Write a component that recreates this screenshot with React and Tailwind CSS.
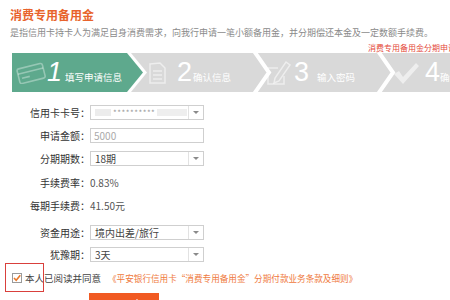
import React from "react";

function Arrow() {
  return (
    <div className="w-[15px] border-l border-[#e2e2e2] flex items-center justify-center">
      <div className="w-0 h-0 border-l-[3px] border-r-[3px] border-t-[3px] border-l-transparent border-r-transparent border-t-[#8a8a8a]" />
    </div>
  );
}

function Row({ label, mt, children }) {
  return (
    <div className={`flex items-center h-[15px] ${mt}`}>
      <div className="w-[90px] text-right leading-[15px] whitespace-nowrap">{label}</div>
      {children}
    </div>
  );
}

function Select({ children }) {
  return (
    <div className="w-[114px] h-[15px] border border-[#cfcfcf] flex items-stretch bg-white">
      <div className="flex-1 flex items-center pl-[4px] leading-[13px] text-[#444] overflow-hidden whitespace-nowrap">{children}</div>
      <Arrow />
    </div>
  );
}

export default function App() {
  return (
    <div className="w-[450px] h-[300px] overflow-hidden bg-white relative font-['Noto_Sans_CJK_SC','Liberation_Sans',sans-serif]">
      <div className="pl-[10px] pt-[8px] text-[12px] leading-[14px] font-bold text-[#e8632c]">消费专用备用金</div>
      <div className="pl-[10px] mt-[5px] text-[9px] leading-[11px] text-[#8a8a8a] whitespace-nowrap">
        是指信用卡持卡人为满足自身消费需求，向我行申请一笔小额备用金，并分期偿还本金及一定数额手续费。
      </div>
      <div className="pl-[368px] mt-[5px] text-[8px] leading-[9px] text-[#e4493a] whitespace-nowrap">消费专用备用金分期申请</div>

      {/* step bar */}
      <div className="ml-[12px] mt-[1px] w-[438px] h-[39px] relative">
        <svg className="absolute inset-0" width="438" height="39" viewBox="0 0 438 39">
          <rect x="0" y="0" width="438" height="39" fill="#d9d9d9" />
          <polygon points="0,0 119,0 135,19.5 119,39 0,39" fill="#ffffff" />
          <polygon points="0,0 115,0 131,19.5 115,39 0,39" fill="#5ea98d" />
          <polyline points="242,-2 257,19.5 242,41" fill="none" stroke="#ffffff" strokeWidth="4" />
          <polyline points="366,-2 381,19.5 366,41" fill="none" stroke="#ffffff" strokeWidth="4" />
        </svg>
        <div className="relative flex h-full items-center text-white">
          {/* step 1 */}
          <div className="w-[123px] flex items-center pl-[3px]">
            <svg width="32" height="22" viewBox="0 0 32 22" className="shrink-0">
              <g transform="rotate(-14 16 11)" fill="none" stroke="#ffffff" strokeOpacity="0.35" strokeWidth="1.6">
                <rect x="3" y="4" width="26" height="15" rx="2" />
                <line x1="3" y1="9" x2="29" y2="9" />
                <line x1="6" y1="14" x2="14" y2="14" />
              </g>
            </svg>
            <div className="flex items-baseline">
              <span className="text-[27px] leading-none italic font-['Liberation_Sans',sans-serif] font-light">1</span>
              <span className="ml-[3px] text-[9.5px] leading-[11px] whitespace-nowrap">填写申请信息</span>
            </div>
          </div>
          {/* step 2 */}
          <div className="w-[123px] flex items-center pl-[12px]">
            <svg width="20" height="24" viewBox="0 0 20 24" className="shrink-0">
              <g fill="none" stroke="#ffffff" strokeOpacity="0.55" strokeWidth="1.5">
                <path d="M3 3 L13 2 L18 7 L18 22 L3 22 Z" />
                <line x1="6" y1="10" x2="15" y2="10" />
                <line x1="6" y1="14" x2="15" y2="14" />
                <line x1="6" y1="18" x2="15" y2="18" />
              </g>
            </svg>
            <div className="flex items-baseline ml-[10px]">
              <span className="text-[27px] leading-none font-['Liberation_Sans',sans-serif]">2</span>
              <span className="ml-[1px] text-[9.5px] leading-[11px] whitespace-nowrap">确认信息</span>
            </div>
          </div>
          {/* step 3 */}
          <div className="w-[124px] flex items-center pl-[8px]">
            <svg width="26" height="26" viewBox="0 0 26 26" className="shrink-0">
              <g fill="none" stroke="#ffffff" strokeOpacity="0.55" strokeWidth="1.5">
                <path d="M2 8 L12 8 M2 8 L2 24 L18 24 L18 16" />
                <path d="M20 2 L24 5 L13 21 L8 23 L9 18 Z" />
              </g>
            </svg>
            <div className="flex items-baseline ml-[2px]">
              <span className="text-[27px] leading-none font-['Liberation_Sans',sans-serif]">3</span>
              <span className="ml-[8px] text-[9.5px] leading-[11px] whitespace-nowrap">输入密码</span>
            </div>
          </div>
          {/* step 4 */}
          <div className="flex-1 flex items-center pl-[10px] overflow-hidden">
            <svg width="28" height="24" viewBox="0 0 28 24" className="shrink-0">
              <path d="M2 13 L7 10 L11 16 L24 2 L27 5 L11 23 Z" fill="#ffffff" fillOpacity="0.55" />
            </svg>
            <div className="flex items-baseline ml-[5px]">
              <span className="text-[27px] leading-none font-['Liberation_Sans',sans-serif]">4</span>
              <span className="ml-[0px] text-[9.5px] leading-[11px] whitespace-nowrap">确认完成</span>
            </div>
          </div>
        </div>
      </div>

      {/* form */}
      <div className="flex flex-col text-[10px] text-[#333]">
        <Row label="信用卡卡号：" mt="mt-[13px]">
          <Select>
            <span className="w-[16px] h-[7px] bg-[#ececec] mr-[2px]" />
            <span className="text-[8px] text-[#9a9a9a] tracking-[0.5px]">**********</span>
            <span className="w-[30px] h-[7px] bg-[#eeeeee] ml-[2px]" />
          </Select>
        </Row>
        <Row label="申请金额：" mt="mt-[8px]">
          <div className="w-[114px] h-[15px] border border-[#cfcfcf] flex items-center pl-[3px] leading-[13px] text-[#aaaaaa]">5000</div>
        </Row>
        <Row label="分期期数：" mt="mt-[8px]">
          <Select>18期</Select>
        </Row>
        <Row label="手续费率：" mt="mt-[9px]">
          <span className="text-[#555] leading-[15px]">0.83%</span>
        </Row>
        <Row label="每期手续费：" mt="mt-[8px]">
          <span className="text-[#555] leading-[15px]">41.50元</span>
        </Row>
        <Row label="资金用途：" mt="mt-[12px]">
          <Select>境内出差/旅行</Select>
        </Row>
        <Row label="犹豫期：" mt="mt-[7px]">
          <Select>3天</Select>
        </Row>

        <div className="flex items-center h-[12px] mt-[10px] pl-[12px] text-[9.5px] leading-[12px] whitespace-nowrap">
          <svg width="10" height="10" viewBox="0 0 10 10" className="shrink-0">
            <rect x="0.5" y="0.5" width="9" height="9" fill="#ffffff" stroke="#9a9a9a" />
            <path d="M2 5 L4.2 7.3 L8.3 2.3" fill="none" stroke="#e8782a" strokeWidth="1.6" />
          </svg>
          <span className="ml-[3px] text-[#444]">本人已阅读并同意</span>
          <span className="ml-[7px] text-[8.6px] text-[#ef7a3e]">《平安银行信用卡“消费专用备用金”分期付款业务条款及细则》</span>
        </div>

        <div className="ml-[89px] mt-[9px] w-[70px] h-[22px] bg-[#f15a22] text-white text-[11px] leading-[14px] pt-[4px] text-center tracking-[4px]">下一步</div>
      </div>

      {/* annotation box */}
      <div className="absolute left-[5px] top-[263px] w-[39px] h-[29px] border-[1.5px] border-[#d9403c]" />
    </div>
  );
}
